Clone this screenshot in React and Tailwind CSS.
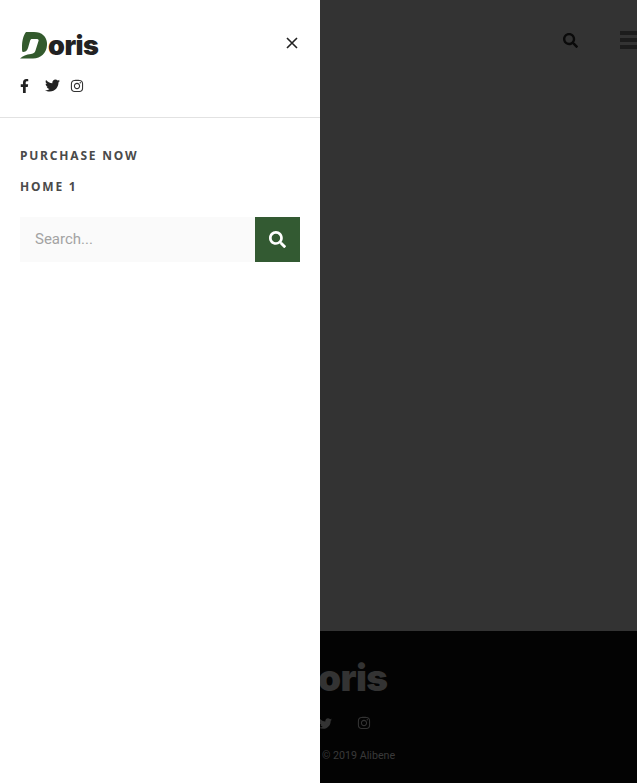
import React from "react";
import { FaFacebookF, FaTwitter, FaInstagram, FaSearch } from "react-icons/fa";

function LogoD({ className }) {
  return (
    <svg viewBox="0 0 27 27" className={className} aria-hidden="true">
      <path fill="#335a2d" d="M6 0 H14 C23 0 27.5 6 27 13 C26.5 21 21 26.5 13 26.5 H0 C3 24 6 22.5 11 22 C14 21.5 15 20.5 15.5 18.5 L18.5 9 C19 7.5 18 7 16 7 H12 C11 7 10.5 7.5 10 9 L8 16 C7 19 5 20 3 20 C2 20 2 18 2 16 C2 9 3 4 6 0 Z" />
    </svg>
  );
}

export default function App() {
  return (
    <div className="relative h-[784px] w-[637px] overflow-hidden bg-white font-['Roboto',sans-serif]">
      <div className="flex h-[783px] flex-col">
        <header className="h-[631px] bg-[#333333]">
          <div className="flex h-[80px] items-center justify-end pl-[563px]">
            <FaSearch className="h-[15px] w-[15px] shrink-0 text-[#0a0a0a]" />
            <div className="ml-[42px] flex w-[17px] shrink-0 flex-col gap-[3px]">
              <span className="h-[4px] bg-[#1c1c1c]" />
              <span className="h-[4px] bg-[#1c1c1c]" />
              <span className="h-[4px] bg-[#1c1c1c]" />
            </div>
          </div>
        </header>
        <footer className="flex flex-1 flex-col bg-[#030303] pt-[28px] pl-[318px]">
          <span className="font-['Inter',sans-serif] text-[37px] leading-[37px] font-black tracking-[-0.6px] text-[#333333]">oris</span>
          <div className="mt-[20px] ml-[1px] flex items-center gap-[25px] text-[#333333]">
            <FaTwitter className="h-[13px] w-[13px]" />
            <FaInstagram className="h-[14px] w-[14px]" />
          </div>
          <p className="mt-[19px] ml-[4px] text-[10.7px] leading-[13px] text-[#3a3a3a]">© 2019 Alibene</p>
        </footer>
      </div>

      <aside className="absolute top-0 left-0 flex h-[784px] w-[320px] flex-col bg-white">
        <div className="h-[118px] border-b border-[#e2e2e2] pt-[32px] pr-[22px] pl-[20px]">
          <div className="flex h-[27px] items-end justify-between">
            <div className="flex items-end">
              <LogoD className="h-[27px] w-[27px] shrink-0" />
              <span className="ml-[1px] font-['Inter',sans-serif] text-[27px] leading-[27px] font-black tracking-[-0.5px] text-[#222222]">oris</span>
            </div>
            <button className="mb-[10px] h-[12px] w-[12px]" aria-label="Close">
              <svg viewBox="0 0 12 12" className="h-[12px] w-[12px]">
                <path d="M1 1 L11 11 M11 1 L1 11" stroke="#222222" strokeWidth="1.6" fill="none" />
              </svg>
            </button>
          </div>
          <div className="mt-[19px] flex items-center text-[#222222]">
            <FaFacebookF className="h-[14px] w-[9px]" />
            <FaTwitter className="ml-[16px] h-[15px] w-[15px]" />
            <FaInstagram className="ml-[10px] h-[14px] w-[14px] text-[#333333]" />
          </div>
        </div>
        <nav className="flex flex-col gap-[12px] px-[20px] pt-[28px] font-['Noto_Sans',sans-serif] text-[12px] leading-[19px] font-bold tracking-[1.8px] text-[#4a4a4a]">
          <a>PURCHASE NOW</a>
          <a>HOME 1</a>
        </nav>
        <div className="mx-[20px] mt-[21px] flex h-[45px]">
          <div className="flex flex-1 items-center bg-[#fafafa] pl-[15px] text-[15px] text-[#a3a3a3]">Search...</div>
          <button className="flex h-[45px] w-[45px] items-center justify-center bg-[#335a32]" aria-label="Search">
            <FaSearch className="h-[17px] w-[17px] text-white" />
          </button>
        </div>
      </aside>
    </div>
  );
}
